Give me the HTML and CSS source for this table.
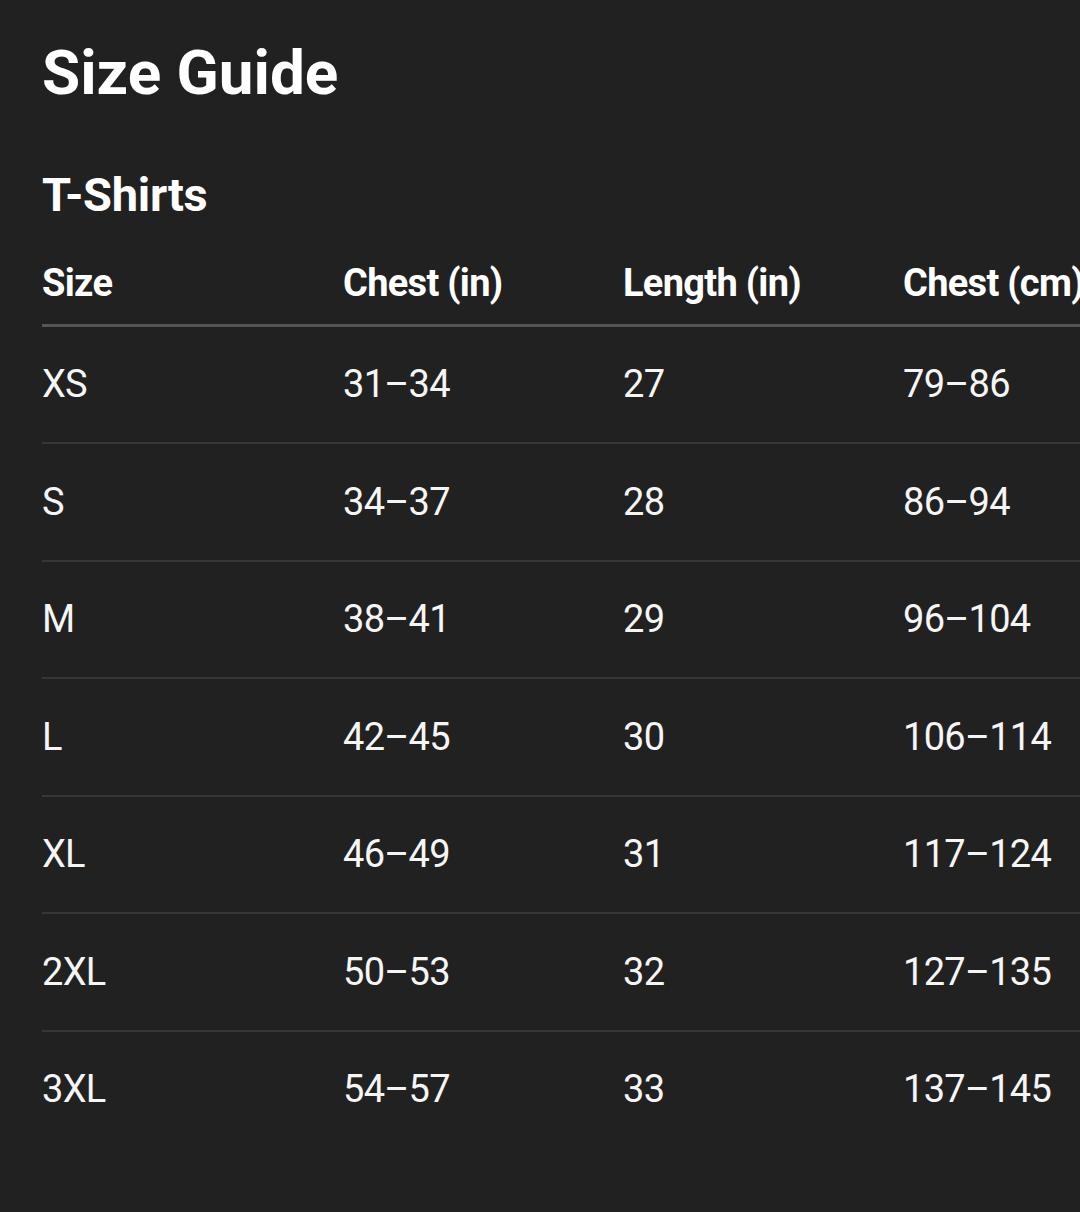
FILE: index.html
```html
<!DOCTYPE html>
<html lang="en">
<head>
<meta charset="utf-8">
<title>Size Guide</title>
<link rel="stylesheet" href="styles.css">
</head>
<body>
<main class="page">
  <h1 class="title">Size Guide</h1>
  <h2 class="section">T-Shirts</h2>
  <div class="table-wrap">
    <table class="sizes">
      <colgroup>
        <col class="c-size"><col class="c-num"><col class="c-num"><col class="c-num">
      </colgroup>
      <thead>
        <tr><th>Size</th><th>Chest (in)</th><th>Length (in)</th><th>Chest (cm)</th></tr>
      </thead>
      <tbody>
        <tr><td>XS</td><td>31–34</td><td>27</td><td>79–86</td></tr>
        <tr><td>S</td><td>34–37</td><td>28</td><td>86–94</td></tr>
        <tr><td>M</td><td>38–41</td><td>29</td><td>96–104</td></tr>
        <tr><td>L</td><td>42–45</td><td>30</td><td>106–114</td></tr>
        <tr><td>XL</td><td>46–49</td><td>31</td><td>117–124</td></tr>
        <tr><td>2XL</td><td>50–53</td><td>32</td><td>127–135</td></tr>
        <tr><td>3XL</td><td>54–57</td><td>33</td><td>137–145</td></tr>
      </tbody>
    </table>
  </div>
</main>
</body>
</html>
```

FILE: styles.css
```css
html, body {
  margin: 0;
  padding: 0;
  background: #212121;
}
body {
  font-family: Roboto, "Noto Sans", "Liberation Sans", sans-serif;
  color: #ffffff;
  overflow: hidden;
}
.page {
  padding: 35.5px 0 0 42px;
}
.title {
  margin: 0;
  font-size: 62px;
  font-weight: 700;
  line-height: normal;
}
.section {
  margin: 58.3px 0 0 0;
  font-size: 47px;
  font-weight: 700;
  line-height: normal;
  letter-spacing: -0.3px;
}
.table-wrap {
  margin-top: 20.6px;
  overflow: hidden;
}
.sizes {
  border-collapse: collapse;
  table-layout: fixed;
  width: 1141px;
  font-size: 38px;
  line-height: 45px;
  letter-spacing: -0.7px;
}
.c-size { width: 301px; }
.c-num { width: 280px; }
.sizes th {
  text-align: left;
  font-weight: 700;
  padding: 18.2px 0 18.2px 0;
  border-bottom: 3px solid #555555;
}
.sizes td {
  font-weight: 400;
  padding: 35.25px 0;
  color: #f5f5f5;
}
.sizes tbody tr + tr td {
  border-top: 2px solid #363636;
}
```
